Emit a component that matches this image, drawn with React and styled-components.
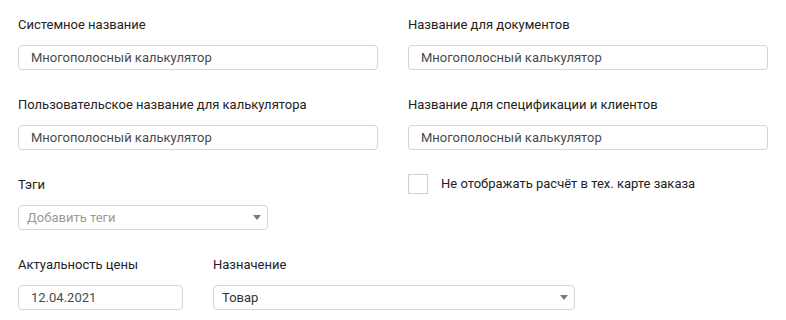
import React from "react";
import styled, { createGlobalStyle } from "styled-components";

const GlobalStyle = createGlobalStyle`
  body {
    margin: 0;
    background: #ffffff;
    font-family: Roboto, "Noto Sans", Arial, sans-serif;
    color: #222222;
  }
`;

const Form = styled.div`
  width: 786px;
  box-sizing: border-box;
  padding: 17px 18px 0;
  display: flex;
  flex-direction: column;
  gap: 27px;
`;

const Row = styled.div`
  display: grid;
  grid-template-columns: 360px 360px;
  column-gap: 30px;
  align-items: start;
`;

const InlineRow = styled.div`
  display: flex;
  gap: 30px;
  align-items: flex-start;
`;

const Field = styled.div`
  display: flex;
  flex-direction: column;
  width: ${(props) => props.width || "100%"};
`;

const Label = styled.label`
  font-size: 13px;
  line-height: 16px;
  color: #222222;
  margin-bottom: 12px;
`;

const Input = styled.div`
  box-sizing: border-box;
  height: 25px;
  border: 1px solid #d6d6d6;
  border-radius: 4px;
  padding: 0 12px;
  font-size: 13px;
  line-height: 23px;
  color: #4a4a4a;
  white-space: nowrap;
`;

const Select = styled.div`
  box-sizing: border-box;
  height: 25px;
  border: 1px solid #d6d6d6;
  border-radius: 4px;
  padding: 0 8px;
  font-size: 13px;
  line-height: 23px;
  color: ${(props) => (props.placeholder ? "#9a9a9a" : "#333333")};
  display: flex;
  align-items: center;
  justify-content: space-between;
`;

const Arrow = styled.span`
  width: 0;
  height: 0;
  margin-right: -2px;
  border-left: 4px solid transparent;
  border-right: 4px solid transparent;
  border-top: 5px solid #7a7a7a;
`;

const CheckRow = styled.label`
  display: flex;
  align-items: center;
  gap: 13px;
  margin-top: -3px;
  font-size: 13px;
  line-height: 16px;
  color: #222222;
`;

const Box = styled.span`
  box-sizing: border-box;
  width: 20px;
  height: 20px;
  border: 1px solid #cfcfcf;
  background: #ffffff;
`;

export default function App() {
  return (
    <>
      <GlobalStyle />
      <Form>
        <Row>
          <Field>
            <Label>Системное название</Label>
            <Input>Многополосный калькулятор</Input>
          </Field>
          <Field>
            <Label>Название для документов</Label>
            <Input>Многополосный калькулятор</Input>
          </Field>
        </Row>
        <Row>
          <Field>
            <Label>Пользовательское название для калькулятора</Label>
            <Input>Многополосный калькулятор</Input>
          </Field>
          <Field>
            <Label>Название для спецификации и клиентов</Label>
            <Input>Многополосный калькулятор</Input>
          </Field>
        </Row>
        <Row>
          <Field>
            <Label>Тэги</Label>
            <Field width="250px">
              <Select placeholder>
                Добавить теги
                <Arrow />
              </Select>
            </Field>
          </Field>
          <CheckRow>
            <Box />
            Не отображать расчёт в тех. карте заказа
          </CheckRow>
        </Row>
        <InlineRow>
          <Field width="165px">
            <Label>Актуальность цены</Label>
            <Input>12.04.2021</Input>
          </Field>
          <Field width="362px">
            <Label>Назначение</Label>
            <Select>
              Товар
              <Arrow />
            </Select>
          </Field>
        </InlineRow>
      </Form>
    </>
  );
}
